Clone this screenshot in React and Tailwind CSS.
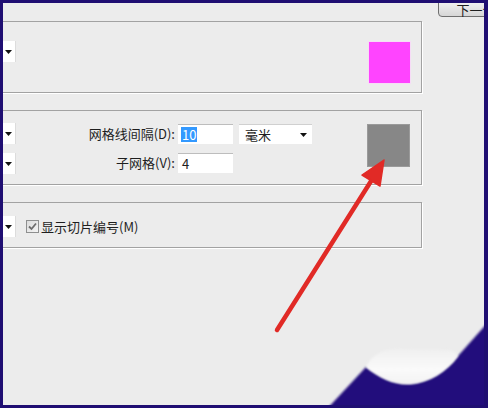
import React from "react";

const FONT = { fontFamily: '"Noto Sans CJK SC", "Noto Sans", sans-serif' };

function Drop() {
  return (
    <div className="ml-[1px] w-[30px] h-[21px] bg-white border-r border-[#dcdcdc] flex items-center justify-end pr-[3px] shrink-0">
      <svg width="7" height="4" viewBox="0 0 7 4">
        <path d="M0 0 L7 0 L3.5 4 Z" fill="#111" />
      </svg>
    </div>
  );
}

export default function App() {
  return (
    <div
      className="relative w-[488px] h-[408px] overflow-hidden bg-[#1f0e72] pt-[3px] pl-[3px] pr-[4px] pb-[3px]"
      style={FONT}
    >
      <div className="relative h-full overflow-hidden bg-[#ececec] text-[13px] text-[#1e1e1e]">
        {/* top row with cut-off button */}
        <div className="flex h-[18px] items-start justify-end">
          <div className="mt-[-3px] mr-[-30px] h-[17px] w-[76px] rounded-bl-[4px] border border-[#6f6f6f] bg-gradient-to-b from-[#f4f4f4] to-[#d6d6d6] flex items-center justify-center leading-none pt-[2px]">
            下一个
          </div>
        </div>

        {/* panels */}
        <div className="ml-[-19px] w-[438px] flex flex-col">
          {/* panel 1 */}
          <div className="h-[72px] border border-[#a2a2a2] shadow-[1px_1px_0_#ffffff] flex items-start">
            <div className="mt-[19px]">
              <Drop />
            </div>
            <div className="ml-auto mr-[11px] mt-[20px] w-[41px] h-[41px] bg-[#ff44ff] outline outline-1 outline-[#f6dcf6]" />
          </div>

          {/* panel 2 */}
          <div className="mt-[17px] h-[75px] border border-[#a2a2a2] shadow-[1px_1px_0_#ffffff] flex items-start pt-[12px]">
            <div className="flex flex-col gap-[9px]">
              <Drop />
              <Drop />
            </div>
            <div className="mt-[1px] flex flex-col gap-[9px]">
              <div className="flex items-center h-[20px]">
                <div className="w-[159px] text-right whitespace-nowrap">网格线间隔(D):</div>
                <div className="ml-[3px] w-[55px] h-[20px] bg-white border-t border-[#bdbdbd] flex items-center pl-[3px]">
                  <span className="bg-[#3399ff] text-white leading-[15px] px-[1px]">10</span>
                </div>
                <div className="ml-[6px] w-[73px] h-[20px] bg-white border-t border-[#d0d0d0] flex items-center pl-[6px] pr-[5px]">
                  <span>毫米</span>
                  <svg className="ml-auto" width="7" height="4" viewBox="0 0 7 4">
                    <path d="M0 0 L7 0 L3.5 4 Z" fill="#111" />
                  </svg>
                </div>
              </div>
              <div className="flex items-center h-[20px]">
                <div className="w-[159px] text-right whitespace-nowrap">子网格(V):</div>
                <div className="ml-[3px] w-[55px] h-[20px] bg-white border-t border-[#bdbdbd] flex items-center pl-[4px]">
                  4
                </div>
              </div>
            </div>
            <div className="ml-auto mr-[12px] mt-[2px] w-[41px] h-[41px] bg-[#878787] outline outline-1 outline-[#9a9a9a]" />
          </div>

          {/* panel 3 */}
          <div className="mt-[17px] h-[46px] border border-[#a2a2a2] shadow-[1px_1px_0_#ffffff] flex items-center pt-[3px]">
            <Drop />
            <div className="ml-[10px] w-[13px] h-[13px] border border-[#8e8f8f] bg-gradient-to-br from-[#dcdcdc] to-[#f4f4f4] flex items-center justify-center shrink-0">
              <svg width="9" height="9" viewBox="0 0 9 9">
                <path d="M1 4.5 L3.5 7 L8 1.5" stroke="#6d6d6d" strokeWidth="1.8" fill="none" />
              </svg>
            </div>
            <span className="ml-[2px] whitespace-nowrap">显示切片编号(M)</span>
          </div>
        </div>
      </div>

      {/* overlay: red arrow and page curl */}
      <svg
        className="absolute inset-0 pointer-events-none"
        width="488"
        height="408"
        viewBox="0 0 488 408"
      >
        <defs>
          <filter id="soft" x="-10%" y="-10%" width="120%" height="120%">
            <feGaussianBlur stdDeviation="1.2" />
          </filter>
          <linearGradient id="curlg" x1="0" y1="0" x2="0" y2="1">
            <stop offset="0" stopColor="#f0f0f0" />
            <stop offset="0.6" stopColor="#fafafa" />
            <stop offset="1" stopColor="#f2f2f2" />
          </linearGradient>
        </defs>
        <line x1="277" y1="330" x2="373" y2="178" stroke="#e12a26" strokeWidth="4.5" strokeLinecap="round" />
        <polygon points="384,160 362,175 380,186" fill="#e12a26" stroke="#e12a26" strokeWidth="1.5" strokeLinejoin="round" />

        <path
          d="M326 410 L366 367 C380 378 395 385 410 384 C430 382 446 372 458 356 L490 320 L490 410 Z"
          fill="#24117c"
          filter="url(#soft)"
        />
        <path
          d="M366 367 C371 357 379 350 394 349 L448 350 C454 351 457 353 458 356 C446 372 430 382 410 384 C395 385 380 378 366 367 Z"
          fill="url(#curlg)"
          filter="url(#soft)"
        />
        <rect x="0" y="405" width="488" height="3" fill="#1f0e72" />
        <rect x="484" y="0" width="4" height="408" fill="#1f0e72" />
      </svg>
    </div>
  );
}
